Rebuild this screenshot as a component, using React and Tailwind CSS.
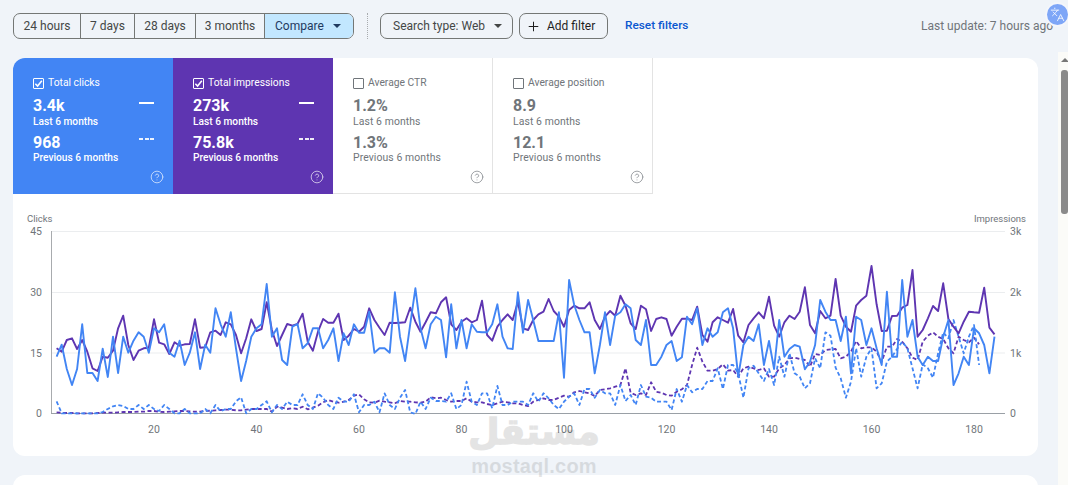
import { CircleHelp, Languages, Plus } from "lucide-react";

// chart values are y positions measured against the plot (79 = top gridline, 625 = baseline, 3 units per px)
const clicks = [
  455, 419, 492, 540, 492, 358, 504, 504, 528, 431, 516, 395, 504, 395, 443, 407, 382, 395, 443, 370, 382, 358, 443, 455, 407, 480, 443, 382, 492, 419, 443, 310, 358, 395, 322, 431, 528, 467, 395, 370, 358, 237,
  395, 370, 465, 480, 365, 357, 430, 415, 370, 370, 430, 405, 370, 468, 385, 420, 358, 383, 383, 320, 443, 430, 430, 443, 262, 395, 468, 358, 250, 370, 430, 358, 335, 345, 457, 298, 430, 345, 430, 358, 380, 382, 382, 358, 298, 395, 430, 432, 262, 383, 285, 345, 408,
  408, 408, 408, 322, 518, 225, 300, 345, 382, 382, 505, 420, 322, 420, 332, 322, 298, 310, 405, 420, 345, 480, 480, 455, 420, 408, 468, 457, 335, 358, 310, 420, 370, 395, 382, 322, 310, 370, 515, 420, 395, 408, 358, 480, 408, 492, 345, 455, 432, 420,
  425, 493, 470, 420, 285, 320, 345, 345, 408, 335, 505, 335, 345, 420, 370, 430, 480, 260, 455, 455, 225, 395, 345, 455, 480, 455, 468, 468, 395, 345, 540, 505, 455, 480, 370, 385, 420, 505, 395,
];

const impressions = [
  430, 440, 405, 400, 432, 405, 440, 490, 498, 455, 458, 437, 370, 332, 420, 465, 437, 430, 428, 343, 413, 418, 447, 412, 422, 418, 417, 343, 428, 427, 382, 377, 390, 352, 358, 390, 445, 400, 343, 378, 372, 292,
  375, 423, 390, 357, 362, 357, 326, 410, 437, 380, 342, 353, 353, 326, 405, 392, 372, 380, 365, 310, 345, 368, 390, 353, 354, 353, 352, 308, 350, 380, 352, 322, 325, 292, 277, 358, 375, 350, 340, 352, 345, 287, 390, 407, 365, 345, 328, 345, 290, 370, 375, 345, 328,
  320, 282, 318, 335, 365, 315, 302, 310, 310, 292, 345, 372, 335, 318, 332, 272, 302, 355, 372, 302, 313, 378, 342, 337, 342, 392, 365, 341, 341, 345, 305, 390, 410, 352, 337, 345, 353, 312, 392, 412, 360, 340, 322, 340, 275, 362, 395, 352, 332, 342,
  320, 247, 360, 385, 318, 340, 332, 222, 332, 365, 380, 302, 285, 272, 183, 298, 378, 377, 333, 332, 308, 300, 195, 395, 375, 340, 303, 318, 235, 342, 365, 385, 350, 320, 322, 323, 248, 368, 388,
];

const prevClicks = [
  589, 625, 625, 625, 625, 625, 625, 625, 625, 621, 612, 604, 600, 603, 612, 612, 600, 612, 600, 612, 618, 600, 612, 625, 625, 612, 625, 625, 625, 612, 625, 600, 619, 612, 612, 589, 577, 625, 612, 612, 600, 589,
  622, 600, 612, 590, 600, 600, 568, 600, 612, 565, 578, 600, 612, 578, 590, 590, 568, 622, 600, 600, 590, 622, 565, 600, 612, 578, 555, 622, 627, 590, 612, 578, 588, 588, 590, 565, 612, 600, 530, 590, 600, 565, 565, 610, 543, 600, 600, 590, 590, 590, 600, 565, 590,
  565, 580, 600, 612, 590, 575, 565, 600, 552, 552, 578, 555, 565, 565, 600, 540, 588, 570, 600, 540, 575, 578, 590, 590, 590, 615, 552, 590, 540, 562, 552, 552, 528, 528, 490, 552, 480, 480, 505, 578, 490, 482, 505, 528, 492, 540, 455, 515, 445, 505,
  515, 550, 535, 460, 490, 382, 392, 488, 520, 578, 530, 430, 515, 455, 430, 550, 535, 470, 455, 432, 410, 430, 490, 550, 478, 490, 518, 445, 382, 400, 345, 395, 445, 395, 360, 480,
];

const prevImpressions = [
  622, 623, 624, 624, 625, 625, 625, 625, 624, 623, 623, 623, 622, 621, 621, 621, 620, 620, 618, 618, 620, 621, 620, 619, 618, 618, 619, 620, 620, 618, 617, 616, 615, 614, 614, 616, 616, 614, 612, 612, 612, 612,
  620, 605, 608, 612, 610, 612, 605, 613, 608, 602, 592, 585, 590, 593, 590, 585, 572, 568, 583, 592, 593, 587, 590, 592, 595, 588, 590, 590, 592, 593, 590, 577, 580, 578, 585, 590, 588, 588, 580, 590, 592, 592, 597, 600, 595, 590, 592, 595, 595, 600, 603, 590, 585,
  580, 585, 585, 578, 572, 575, 562, 558, 562, 565, 573, 555, 553, 550, 545, 540, 490, 563, 570, 565, 570, 532, 560, 563, 570, 572, 560, 553, 540, 480, 428, 470, 497, 497, 492, 478, 497, 495, 515, 490, 485, 490, 495, 490, 515, 515, 490, 480, 460, 458,
  462, 465, 485, 447, 450, 435, 433, 432, 460, 455, 440, 408, 430, 427, 427, 440, 470, 425, 425, 402, 410, 430, 458, 465, 410, 392, 382, 395, 402, 430, 445, 395, 405, 412, 398, 418,
];

const ranges = [
  { label: "24 hours", className: "w-[67px]" },
  { label: "7 days", className: "w-[54px]" },
  { label: "28 days", className: "w-[61px]" },
  { label: "3 months", className: "w-[69px]" },
];

const metrics = [
  { title: "Total clicks", cur: "3.4k", prev: "968", checked: true, className: "bg-[#4285f4] text-white" },
  { title: "Total impressions", cur: "273k", prev: "75.8k", checked: true, className: "bg-[#5e35b1] text-white" },
  { title: "Average CTR", cur: "1.2%", prev: "1.3%", className: "bg-white text-[#70757a] border-r border-b border-[#e3e3e3]" },
  { title: "Average position", cur: "8.9", prev: "12.1", className: "bg-white text-[#70757a] border-r border-b border-[#e3e3e3]" },
];

const toPoints = (values) =>
  values.map((v, i) => `${(56.6 + i * 5.125).toFixed(1)},${(205 + v / 3).toFixed(1)}`).join(" ");

const Caret = () => (
  <span className="w-0 h-0 border-x-[4px] border-x-transparent border-t-[4px] border-t-current" />
);

const MetricTile = ({ title, cur, prev, checked, className }) => {
  const subClass = checked
    ? "text-[10.2px] leading-[12px] font-medium"
    : "text-[10.4px] leading-[12px] font-normal tracking-[0.1px]";

  return (
    <div className={`relative w-[160px] h-[136px] pl-[20px] pt-[20px] ${className}`}>
      <div className="flex items-center gap-[4px] h-[11px]">
        <span className="w-[11px] h-[11px] border border-current rounded-[1px] flex items-center justify-center">
          {checked && (
            <svg width="9" height="9" viewBox="0 0 10 10" fill="none" stroke="currentColor" strokeWidth="1.7">
              <path d="M1.5 5.2 4 7.8 8.7 2" />
            </svg>
          )}
        </span>
        <span className="text-[10.3px] leading-none font-normal">{title}</span>
      </div>
      <div className="mt-[8px] text-[16px] leading-[17px] font-bold">{cur}</div>
      <div className={`mt-[2px] ${subClass}`}>Last 6 months</div>
      <div className="mt-[6px] text-[16px] leading-[17px] font-bold">{prev}</div>
      <div className={`mt-[1px] ${subClass}`}>Previous 6 months</div>
      {checked && (
        <>
          <span className="absolute left-[126px] top-[44px] w-[15px] h-[2px] bg-white" />
          <span className="absolute left-[126px] top-[80px] flex gap-[1.5px]">
            <span className="w-[4px] h-[2px] bg-white/90" />
            <span className="w-[4px] h-[2px] bg-white/90" />
            <span className="w-[4px] h-[2px] bg-white/90" />
          </span>
        </>
      )}
      <CircleHelp size={14} strokeWidth={1.4} className="absolute left-[137px] top-[112px] opacity-80" />
    </div>
  );
};

const Chart = () => (
  <svg viewBox="13 194 1025 262" className="block w-[1025px] h-[262px]" fontFamily="Roboto, sans-serif" fontSize="10" fill="#70757a">
    {[231.5, 292.5, 353].map((y) => (
      <line key={y} x1="51" x2="1005" y1={y} y2={y} stroke="#ebedef" />
    ))}
    <line x1="51.5" x2="51.5" y1="231" y2="414" stroke="#a8abae" />
    <line x1="51" x2="1005" y1="413.5" y2="413.5" stroke="#9aa0a6" />

    <text x="27" y="222" fontSize="9.5">Clicks</text>
    <text x="1026" y="222" fontSize="9.5" textAnchor="end">Impressions</text>
    {[["45", 235], ["30", 296], ["15", 357], ["0", 417]].map(([t, y]) => (
      <text key={t} x="42" y={y} textAnchor="end" fontSize="10.5">{t}</text>
    ))}
    {[["3k", 235], ["2k", 296], ["1k", 357], ["0", 417]].map(([t, y]) => (
      <text key={t} x="1010" y={y} fontSize="10.5">{t}</text>
    ))}
    {[20, 40, 60, 80, 100, 120, 140, 160, 180].map((n) => (
      <text key={n} x={154 + (n - 20) * 5.125} y="433" textAnchor="middle" fontSize="10.5">{n}</text>
    ))}

    <g fill="none" strokeLinejoin="round">
      <polyline points={toPoints(prevImpressions)} stroke="#5e35b1" strokeWidth="1.8" strokeDasharray="4 2.5" />
      <polyline points={toPoints(prevClicks)} stroke="#4285f4" strokeWidth="1.8" strokeDasharray="4 2.5" />
      <polyline points={toPoints(impressions)} stroke="#5e35b1" strokeWidth="1.9" />
      <polyline points={toPoints(clicks)} stroke="#4285f4" strokeWidth="1.9" />
    </g>
  </svg>
);

export default function App() {
  return (
    <div className="relative flex h-[485px] w-[1068px] overflow-hidden bg-[#f0f4f9] font-['Roboto',sans-serif]">
      <div className="w-[1058px] pl-[13px] pr-[20px] pt-[13px]">
        <div className="flex items-center h-[26px] text-[12px] text-[#444746]">
          <div className="flex h-full w-[341px] border border-[#747775] rounded-[7px] overflow-hidden">
            {ranges.map((r) => (
              <div key={r.label} className={`flex items-center justify-center shrink-0 border-r border-[#747775] whitespace-nowrap ${r.className}`}>
                {r.label}
              </div>
            ))}
            <div className="flex flex-1 items-center gap-[9px] pl-[10px] bg-[#c2e7ff] text-[#1f3a5f]">
              Compare
              <Caret />
            </div>
          </div>
          <div className="ml-[13px] h-full border-l border-dotted border-[#a8abae]" />
          <div className="ml-[12px] flex items-center gap-[9px] h-full w-[133px] pl-[12px] border border-[#747775] rounded-[7px] whitespace-nowrap">
            Search type: Web
            <Caret />
          </div>
          <div className="ml-[6px] flex items-center gap-[6px] h-full w-[89px] pl-[6px] border border-[#747775] rounded-[7px] whitespace-nowrap text-[#1f1f1f]">
            <Plus size={15} strokeWidth={1.6} />
            Add filter
          </div>
          <span className="ml-[17px] text-[11.8px] text-[#0b57d0] font-medium whitespace-nowrap">Reset filters</span>
          <span className="ml-auto text-[#70757a] whitespace-nowrap -mr-[15px]">Last update: 7 hours ago</span>
        </div>

        <div className="mt-[19px] h-[398px] bg-white rounded-xl overflow-hidden">
          <div className="flex">
            {metrics.map((m) => (
              <MetricTile key={m.title} {...m} />
            ))}
          </div>
          <Chart />
        </div>

        <div className="mt-[19px] h-[40px] bg-white rounded-t-xl" />
      </div>

      <div className="mt-[52px] w-[10px] bg-[#fbfbf8] pl-[3px] pt-[6px]">
        <span className="block w-0 h-0 ml-[-0.5px] border-x-[4px] border-x-transparent border-b-[4px] border-b-[#777]" />
        <div className="mt-[8px] h-[144px] w-full bg-[#8a8a8a] rounded-[3px]" />
      </div>

      <div className="absolute left-[1045px] top-[2px] w-[25px] h-[25px] rounded-full bg-[#7ea6f7] border-[2px] border-[#f4f6fb] flex items-center justify-start pl-[3px] text-white">
        <Languages size={15} strokeWidth={1.3} />
      </div>

      <div className="absolute left-[466px] top-[409px] w-[136px] flex flex-col items-center text-black opacity-10 pointer-events-none">
        <span className="font-['DejaVu_Sans',sans-serif] font-bold text-[36px] leading-[46px] [-webkit-text-stroke:1.5px_black]">مستقل</span>
        <span className="font-['Liberation_Sans',sans-serif] font-bold text-[20px] leading-[22px] tracking-[0.2px]">mostaql.com</span>
      </div>
    </div>
  );
}
